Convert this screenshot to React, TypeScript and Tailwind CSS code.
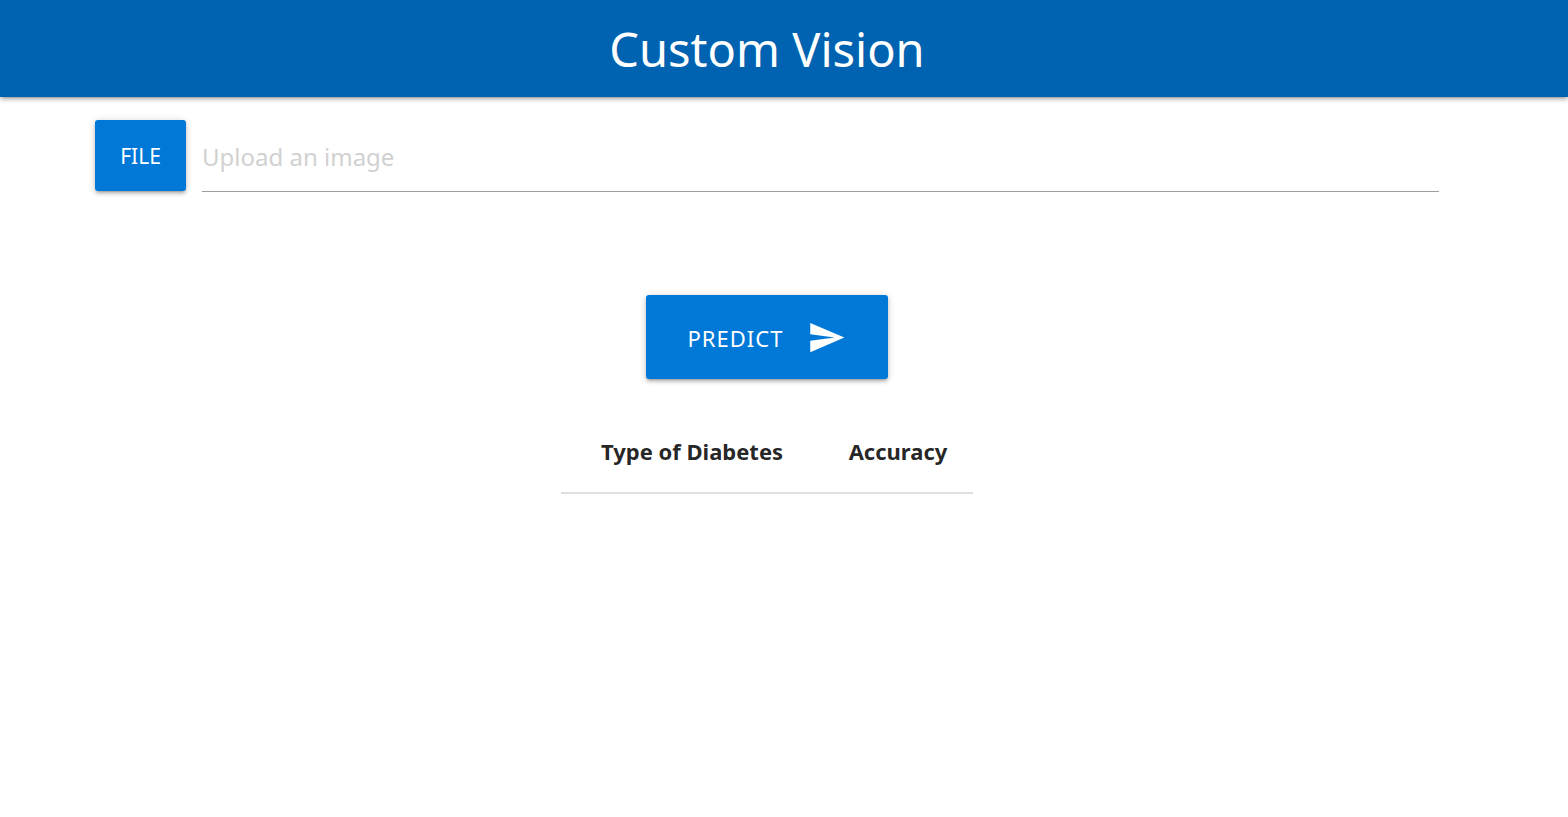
import { useRef, useState } from "react";

export default function App() {
  const fileRef = useRef<HTMLInputElement>(null);
  const [name, setName] = useState("");
  return (
    <div className="min-h-screen bg-white font-['Noto_Sans','Open_Sans',sans-serif] text-black/87">
      <header className="flex h-[97px] items-center justify-center bg-[#0063b1] pr-[34px] shadow-[0_3px_3px_0_rgba(0,0,0,0.14),0_4px_1px_-3px_rgba(0,0,0,0.12),0_1px_7px_0_rgba(0,0,0,0.2)]">
        <h1 className="text-[47px] leading-[96px] text-white">Custom Vision</h1>
      </header>
      <main className="pr-[34px]">
        <form onSubmit={(e) => e.preventDefault()} className="flex flex-col items-center px-[95px] pt-[23px]">
          <div className="flex w-full items-start gap-4">
            <button type="button" onClick={() => fileRef.current?.click()} className="h-[71px] w-[91px] shrink-0 rounded-[3px] bg-[#0078d7] pt-0.5 text-[21px] text-white shadow-[0_3px_3px_0_rgba(0,0,0,0.14),0_4px_1px_-3px_rgba(0,0,0,0.12),0_1px_7px_0_rgba(0,0,0,0.2)]">FILE</button>
            <input ref={fileRef} type="file" accept="image/*" aria-label="Image file" className="hidden" onChange={(e) => setName(e.target.files?.[0]?.name ?? "")} />
            <input type="text" readOnly value={name} aria-label="Upload an image" placeholder="Upload an image" className="h-[72px] min-w-0 grow border-b border-[#9e9e9e] bg-transparent pt-0.5 text-[24px] outline-none placeholder:text-[#d1d1d1]" />
          </div>
          <button type="submit" className="mt-[103px] flex h-[84px] w-[242px] items-center justify-center gap-6 rounded-[3px] bg-[#0078d7] text-[22px] tracking-[1px] text-white shadow-[0_3px_3px_0_rgba(0,0,0,0.14),0_4px_1px_-3px_rgba(0,0,0,0.12),0_1px_7px_0_rgba(0,0,0,0.2)]">
            <span className="pt-0.5">PREDICT</span>
            <svg viewBox="0 0 24 24" className="size-[39px]" fill="currentColor" aria-hidden="true"><path d="M2.01 21L23 12 2.01 3 2 10l15 2-15 2z" /></svg>
          </button>
        </form>
        <table className="mx-auto mt-[35px] w-[412px] table-fixed border-collapse">
          <thead>
            <tr className="h-[79px] border-b-2 border-[#e0e0e0] text-[22px] leading-8">
              <th scope="col" className="w-[262px] pb-1 font-bold">Type of Diabetes</th>
              <th scope="col" className="pb-1 font-bold">Accuracy</th>
            </tr>
          </thead>
        </table>
      </main>
    </div>
  );
}
